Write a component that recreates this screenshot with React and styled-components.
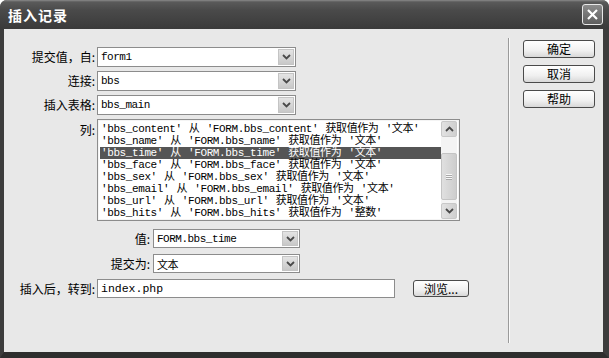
import React from 'react'
import styled, { createGlobalStyle } from 'styled-components'

const GlobalStyle = createGlobalStyle`
  html, body { margin: 0; padding: 0; background: #ffffff; }
  body { font-family: "Noto Sans CJK SC", sans-serif; font-size: 12px; color: #000; }
`

const Window = styled.div`
  width: 609px;
  height: 358px;
  display: flex;
  flex-direction: column;
  border-radius: 7px 7px 0 0;
  overflow: hidden;
  background: #3c3c3c;
`

const TitleBar = styled.div`
  height: 29px;
  flex: none;
  display: flex;
  align-items: center;
  justify-content: space-between;
  padding: 0 6px 0 8px;
  background: linear-gradient(#8a8a8a 0, #5a5a5a 2px, #4a4a4a 35%, #3a3a3a 100%);
  color: #fff;
  font-weight: bold;
  font-size: 14px;
  letter-spacing: 1px;
`

const CloseButton = styled.div`
  width: 21px;
  height: 21px;
  box-sizing: border-box;
  border: 1px solid #e8e8e8;
  border-radius: 3px;
  background: linear-gradient(#8c8c8c, #5e5e5e);
  display: flex;
  align-items: center;
  justify-content: center;
`

const Frame = styled.div`
  flex: 1;
  display: flex;
  background: #e8e8e8;
  border-left: 4px solid #3c3c3c;
  border-right: 6px solid #3c3c3c;
  border-bottom: 6px solid #2e2e2e;
`

const Form = styled.div`
  width: 504px;
  flex: none;
  padding-top: 18px;
`

const Row = styled.div`
  display: flex;
  align-items: ${p => (p.$top ? 'flex-start' : 'center')};
  height: ${p => p.$h || 20}px;
  margin-bottom: ${p => p.$mb ?? 4}px;
`

const Label = styled.div`
  width: ${p => p.$w}px;
  flex: none;
  box-sizing: border-box;
  text-align: right;
  padding-right: ${p => p.$pr ?? 2}px;
  padding-top: ${p => p.$pt || 0}px;
  white-space: nowrap;
  line-height: 14px;
`

const mono = `"Liberation Mono", "Noto Sans CJK SC", monospace`

const Select = styled.div`
  width: ${p => p.$w}px;
  height: ${p => p.$h || 20}px;
  box-sizing: border-box;
  border: 1px solid #8c8c8c;
  background: #fff;
  display: flex;
  align-items: center;
  padding-left: 3px;
  font-family: ${mono};
  font-size: 11px;
  letter-spacing: -0.5px;
  white-space: nowrap;
`

const Chevron = styled.div`
  margin-left: auto;
  margin-right: 1px;
  width: 16px;
  height: calc(100% - 2px);
  box-sizing: border-box;
  border: 1px solid #c4c4c4;
  background: linear-gradient(#e4e4e4, #c8c8c8);
  display: flex;
  align-items: center;
  justify-content: center;
`

const ListBox = styled.div`
  width: 363px;
  height: 102px;
  box-sizing: border-box;
  border: 1px solid #8c8c8c;
  box-shadow: inset 0 0 0 1px #f4f4f4;
  background: #fff;
  display: flex;
`

const Items = styled.div`
  flex: 1;
  padding: 3px 0 0 2px;
  font-family: ${mono};
  font-size: 11px;
  letter-spacing: -0.4px;
  word-spacing: 1px;
`

const Item = styled.div`
  height: 12px;
  line-height: 12px;
  padding-left: 1px;
  white-space: nowrap;
  background: ${p => (p.$sel ? '#555555' : 'transparent')};
  color: ${p => (p.$sel ? '#fff' : '#000')};
`

const ScrollBar = styled.div`
  width: 16px;
  margin: 1px 2px 1px 0;
  display: flex;
  flex-direction: column;
  background: #f4f4f4;
`

const ScrollArrow = styled.div`
  height: 16px;
  box-sizing: border-box;
  border: 1px solid #c8c8c8;
  border-radius: 2px;
  background: linear-gradient(90deg, #e2e2e2, #cfcfcf);
  display: flex;
  align-items: center;
  justify-content: center;
`

const Track = styled.div`
  flex: 1;
  display: flex;
  flex-direction: column;
`

const Thumb = styled.div`
  margin-top: 16px;
  height: 47px;
  box-sizing: border-box;
  border: 1px solid #c4c4c4;
  border-radius: 2px;
  background: linear-gradient(90deg, #e0e0e0, #cdcdcd);
  display: flex;
  flex-direction: column;
  align-items: center;
  justify-content: center;
  gap: 1px;
`

const Grip = styled.div`
  width: 6px;
  height: 1px;
  background: #f8f8f8;
  box-shadow: 0 1px 0 #a8a8a8;
`

const TextInput = styled.div`
  width: 298px;
  height: 19px;
  box-sizing: border-box;
  border: 1px solid #8c8c8c;
  background: #fff;
  display: flex;
  align-items: center;
  padding-left: 3px;
  font-family: ${mono};
  font-size: 11.5px;
`

const Button = styled.div`
  width: ${p => p.$w || 72}px;
  height: ${p => p.$h || 18}px;
  margin-left: ${p => p.$ml || 0}px;
  box-sizing: border-box;
  border: 1px solid #4a4a4a;
  border-radius: 3px;
  background: linear-gradient(#ffffff, #f0f0f0 60%, #d8d8d8);
  display: flex;
  align-items: center;
  justify-content: center;
  font-size: 12px;
  line-height: 1;
`

const Side = styled.div`
  flex: 1;
  display: flex;
`

const Separator = styled.div`
  width: 0;
  margin: 9px 0 9px;
  border-left: 1px solid #9a9a9a;
  border-right: 1px solid #fafafa;
`

const ButtonColumn = styled.div`
  display: flex;
  flex-direction: column;
  gap: 7px;
  padding: 11px 0 0 13px;
`

const ChevronIcon = () => (
  <svg width="9" height="6" viewBox="0 0 9 6">
    <path d="M1 1 L4.5 4.5 L8 1" fill="none" stroke="#4a4a4a" strokeWidth="1.8" />
  </svg>
)

const UpIcon = () => (
  <svg width="9" height="6" viewBox="0 0 9 6">
    <path d="M1 5 L4.5 1.5 L8 5" fill="none" stroke="#4a4a4a" strokeWidth="1.8" />
  </svg>
)

const columns = [
  ["'bbs_content'", "'FORM.bbs_content'", "'文本'"],
  ["'bbs_name'", "'FORM.bbs_name'", "'文本'"],
  ["'bbs_time'", "'FORM.bbs_time'", "'文本'"],
  ["'bbs_face'", "'FORM.bbs_face'", "'文本'"],
  ["'bbs_sex'", "'FORM.bbs_sex'", "'文本'"],
  ["'bbs_email'", "'FORM.bbs_email'", "'文本'"],
  ["'bbs_url'", "'FORM.bbs_url'", "'文本'"],
  ["'bbs_hits'", "'FORM.bbs_hits'", "'整数'"],
]

function Dropdown({ w, h, value }) {
  return (
    <Select $w={w} $h={h}>
      {value}
      <Chevron><ChevronIcon /></Chevron>
    </Select>
  )
}

export default function App() {
  return (
    <>
      <GlobalStyle />
      <Window>
        <TitleBar>
          <span>插入记录</span>
          <CloseButton>
            <svg width="13" height="13" viewBox="0 0 13 13">
              <path d="M2 2 L11 11 M11 2 L2 11" stroke="#fff" strokeWidth="2.2" />
            </svg>
          </CloseButton>
        </TitleBar>
        <Frame>
          <Form>
            <Row>
              <Label $w={93}>提交值，自:</Label>
              <Dropdown w={199} value="form1" />
            </Row>
            <Row>
              <Label $w={93}>连接:</Label>
              <Dropdown w={199} value="bbs" />
            </Row>
            <Row>
              <Label $w={93}>插入表格:</Label>
              <Dropdown w={199} value="bbs_main" />
            </Row>
            <Row $top $h={102} $mb={8}>
              <Label $w={93} $pt={4}>列:</Label>
              <ListBox>
                <Items>
                  {columns.map(([col, src, type], i) => (
                    <Item key={col} $sel={i === 2}>
                      {col} 从 {src} 获取值作为 {type}
                    </Item>
                  ))}
                </Items>
                <ScrollBar>
                  <ScrollArrow><UpIcon /></ScrollArrow>
                  <Track>
                    <Thumb><Grip /><Grip /><Grip /></Thumb>
                  </Track>
                  <ScrollArrow><ChevronIcon /></ScrollArrow>
                </ScrollBar>
              </ListBox>
            </Row>
            <Row $h={19} $mb={6}>
              <Label $w={149} $pr={3}>值:</Label>
              <Dropdown w={147} h={19} value="FORM.bbs_time" />
            </Row>
            <Row $h={19} $mb={6}>
              <Label $w={149} $pr={3}>提交为:</Label>
              <Dropdown w={147} h={19} value="文本" />
            </Row>
            <Row $h={19}>
              <Label $w={93}>插入后，转到:</Label>
              <TextInput>index.php</TextInput>
              <Button $w={56} $h={17} $ml={18}>浏览...</Button>
            </Row>
          </Form>
          <Side>
            <Separator />
            <ButtonColumn>
              <Button>确定</Button>
              <Button>取消</Button>
              <Button>帮助</Button>
            </ButtonColumn>
          </Side>
        </Frame>
      </Window>
    </>
  )
}
